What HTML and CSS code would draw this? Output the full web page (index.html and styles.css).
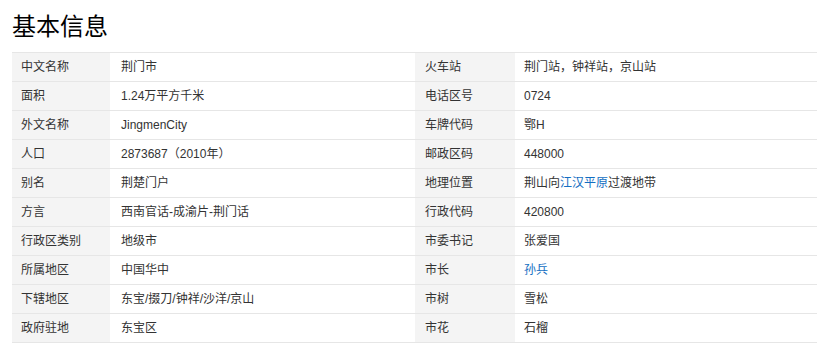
FILE: index.html
```html
<!DOCTYPE html>
<html lang="zh">
<head>
<meta charset="utf-8">
<link rel="stylesheet" href="styles.css">
</head>
<body>
<div class="page">
  <h2 class="title">基本信息</h2>
  <div class="info">
    <div class="k">中文名称</div><div class="v">荆门市</div><div class="k">火车站</div><div class="v">荆门站，钟祥站，京山站</div>
    <div class="k">面积</div><div class="v">1.24万平方千米</div><div class="k">电话区号</div><div class="v">0724</div>
    <div class="k">外文名称</div><div class="v">JingmenCity</div><div class="k">车牌代码</div><div class="v">鄂H</div>
    <div class="k">人口</div><div class="v">2873687（2010年）</div><div class="k">邮政区码</div><div class="v">448000</div>
    <div class="k">别名</div><div class="v">荆楚门户</div><div class="k">地理位置</div><div class="v">荆山向<a class="link">江汉平原</a>过渡地带</div>
    <div class="k">方言</div><div class="v">西南官话-成渝片-荆门话</div><div class="k">行政代码</div><div class="v">420800</div>
    <div class="k">行政区类别</div><div class="v">地级市</div><div class="k">市委书记</div><div class="v">张爱国</div>
    <div class="k">所属地区</div><div class="v">中国华中</div><div class="k">市长</div><div class="v"><a class="link">孙兵</a></div>
    <div class="k">下辖地区</div><div class="v">东宝/掇刀/钟祥/沙洋/京山</div><div class="k">市树</div><div class="v">雪松</div>
    <div class="k">政府驻地</div><div class="v">东宝区</div><div class="k">市花</div><div class="v">石榴</div>
  </div>
</div>
</body>
</html>
```

FILE: styles.css
```css
html, body {
  margin: 0;
  padding: 0;
  background: #fff;
}
body {
  font-family: "Liberation Sans", "Noto Sans CJK SC", sans-serif;
  color: #333;
}
.page {
  padding: 8px 13px 0 12px;
}
.title {
  margin: 0;
  font-family: "Noto Sans CJK SC", sans-serif;
  font-size: 24px;
  font-weight: normal;
  line-height: 34px;
  color: #000;
  height: 44px;
}
.info {
  display: grid;
  grid-template-columns: 98px 305px 100px 302px;
  border-top: 1px solid #e6e6e6;
  font-size: 12px;
}
.k, .v {
  height: 28px;
  line-height: 28px;
  border-bottom: 1px solid #e6e6e6;
  white-space: nowrap;
}
.k {
  background: #f4f4f4;
  padding-left: 9px;
}
.v {
  padding-left: 11px;
}
.v:nth-child(4n) {
  padding-left: 9px;
}
.k:nth-child(4n+3) {
  padding-left: 10px;
}
.link {
  color: #136ec2;
  text-decoration: none;
}
```
